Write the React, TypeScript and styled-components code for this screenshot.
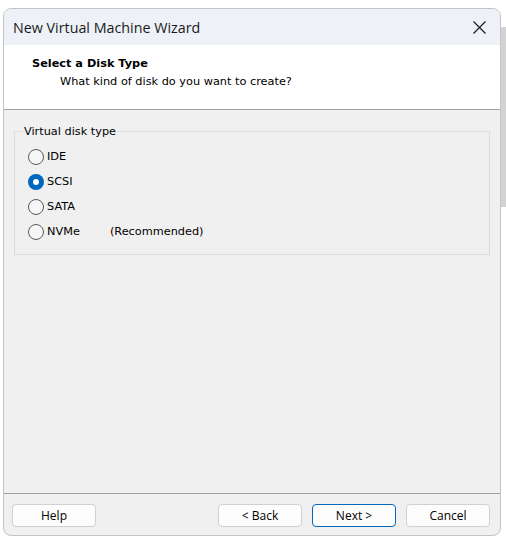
import React from "react";
import styled, { createGlobalStyle } from "styled-components";

const Global = createGlobalStyle`
  html, body { margin: 0; padding: 0; background: #ffffff; }
  body { font-family: "Liberation Sans", Arial, sans-serif; }
`;

const Page = styled.div`
  display: flex;
  align-items: flex-start;
  padding: 8px 0 0 3px;
  width: 506px;
  height: 540px;
  box-sizing: border-box;
`;

const Window = styled.div`
  width: 499px;
  height: 528px;
  box-sizing: border-box;
  border: 1px solid #c4c4c4;
  border-radius: 8px;
  overflow: hidden;
  display: flex;
  flex-direction: column;
  background: #f0f0f0;
`;

const BehindStrip = styled.div`
  width: 5px;
  height: 180px;
  margin-top: 19px;
  background: #d3d3d3;
`;

const TitleBar = styled.div`
  height: 36px;
  background: #eef2f8;
  display: flex;
  align-items: center;
  justify-content: space-between;
  padding: 0 14px 0 9px;
  font-family: "Open Sans", "Noto Sans", sans-serif;
  font-size: 14.3px;
  color: #1a1a1a;
`;

const Header = styled.div`
  height: 65px;
  background: #ffffff;
  border-bottom: 1px solid #a0a0a0;
  padding: 10px 0 0 28px;
  box-sizing: border-box;
  font-family: "DejaVu Sans", sans-serif;
  font-size: 11.3px;
  color: #000;
`;

const HeaderTitle = styled.div`
  font-weight: bold;
  line-height: 17px;
`;

const HeaderSub = styled.div`
  padding-left: 28px;
  line-height: 20px;
`;

const Body = styled.div`
  flex: 1;
  padding: 15px 10px 0 10px;
  border-bottom: 1px solid #a0a0a0;
  font-family: "DejaVu Sans", sans-serif;
  font-size: 11.3px;
`;

const Group = styled.fieldset`
  margin: 0;
  padding: 6px 0 10px 13px;
  border: 1px solid #dcdcdc;
  min-width: 0;
`;

const Legend = styled.legend`
  padding: 0 1px;
  margin-left: -5px;
  color: #000;
`;

const Option = styled.label`
  display: flex;
  align-items: center;
  height: 25px;
  gap: 3px;
  color: #000;
`;

const Radio = styled.span<{ $checked?: boolean }>`
  width: 16px;
  height: 16px;
  box-sizing: border-box;
  border-radius: 50%;
  display: flex;
  align-items: center;
  justify-content: center;
  border: ${(p) => (p.$checked ? "none" : "1px solid #5a5a5a")};
  background: ${(p) => (p.$checked ? "#0067c0" : "#f6f6f6")};
  &::after {
    content: "";
    display: ${(p) => (p.$checked ? "block" : "none")};
    width: 6px;
    height: 6px;
    border-radius: 50%;
    background: #ffffff;
  }
`;

const Note = styled.span`
  margin-left: 27px;
`;

const Footer = styled.div`
  height: 41px;
  display: flex;
  align-items: center;
  padding: 1px 10px 0 8px;
  box-sizing: border-box;
  gap: 10px;
  font-family: "Open Sans", "Noto Sans", sans-serif;
  font-size: 12px;
`;

const Button = styled.button<{ $primary?: boolean }>`
  width: 84px;
  height: 23px;
  box-sizing: border-box;
  border: 1px solid ${(p) => (p.$primary ? "#0067c0" : "#d0d0d0")};
  border-radius: 4px;
  background: #fdfdfd;
  font: inherit;
  color: #000;
  padding: 1px 0 0;
  line-height: 20px;
`;

const Spacer = styled.div`
  flex: 1;
`;

export default function App() {
  return (
    <Page>
      <Global />
      <Window>
        <TitleBar>
          <span>New Virtual Machine Wizard</span>
          <svg width="13" height="13" viewBox="0 0 13 13">
            <path d="M0.5 0.5L12.5 12.5M12.5 0.5L0.5 12.5" stroke="#1a1a1a" strokeWidth="1.2" />
          </svg>
        </TitleBar>
        <Header>
          <HeaderTitle>Select a Disk Type</HeaderTitle>
          <HeaderSub>What kind of disk do you want to create?</HeaderSub>
        </Header>
        <Body>
          <Group>
            <Legend>Virtual disk type</Legend>
            <Option>
              <Radio />
              IDE
            </Option>
            <Option>
              <Radio $checked />
              SCSI
            </Option>
            <Option>
              <Radio />
              SATA
            </Option>
            <Option>
              <Radio />
              NVMe<Note>(Recommended)</Note>
            </Option>
          </Group>
        </Body>
        <Footer>
          <Button>Help</Button>
          <Spacer />
          <Button>&lt; Back</Button>
          <Button $primary>Next &gt;</Button>
          <Button>Cancel</Button>
        </Footer>
      </Window>
      <BehindStrip />
    </Page>
  );
}
